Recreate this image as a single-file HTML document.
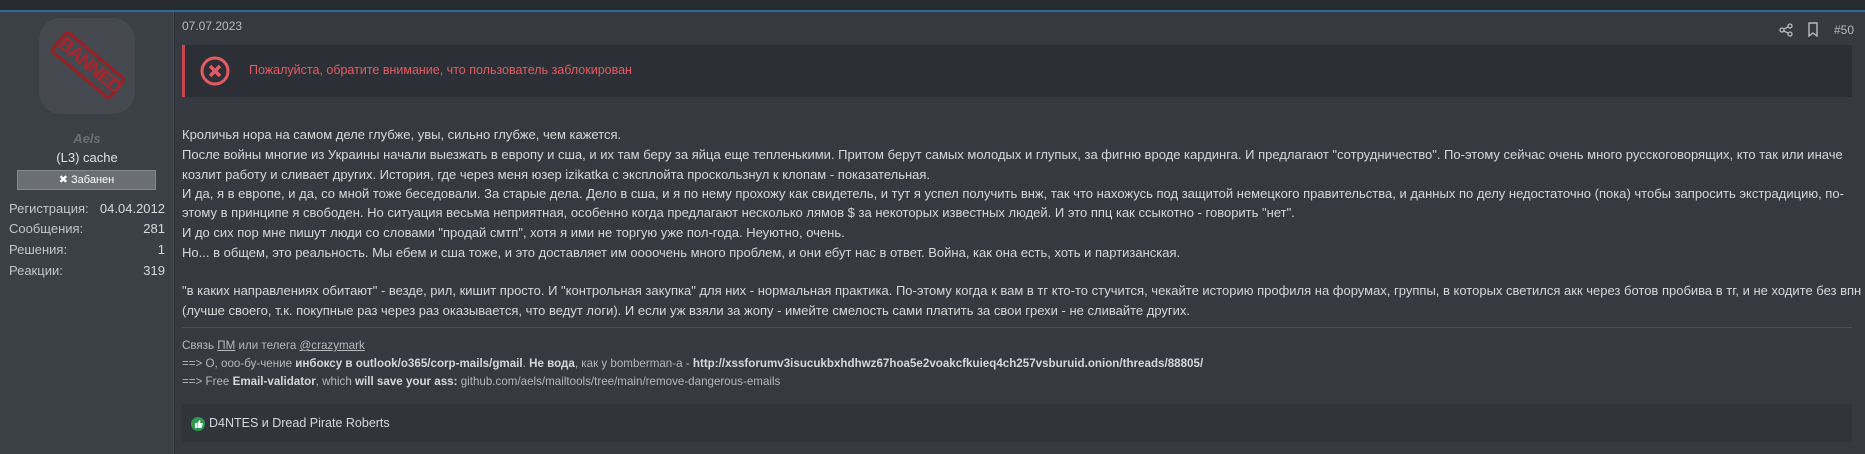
<!DOCTYPE html>
<html><head><meta charset="utf-8">
<style>
*{margin:0;padding:0;box-sizing:border-box}
body{width:1865px;height:454px;background:#2c3035;font-family:"Liberation Sans","DejaVu Sans",sans-serif;color:#d2d4d6;overflow:hidden;position:relative}
.top{position:absolute;left:0;top:0;width:1865px;height:10px;background:#272a2f}
.blue{position:absolute;left:0;top:10px;width:1865px;height:2px;background:#2f6a96}
.side{position:absolute;left:0;top:12px;width:174px;height:442px;background:#3b4047;border-right:1px solid #474c53}
.main{position:absolute;left:175px;top:12px;width:1690px;height:442px;background:#363a40}
.av{position:absolute;left:39px;top:18px;width:96px;height:96px;border-radius:22px;background:#45494f;overflow:hidden}
.stamp{position:absolute;left:10px;top:33px;width:78px;height:28px;border:3px solid #9a1f24;border-radius:5px;color:#a8242a;font-weight:bold;font-size:19px;text-align:center;line-height:22px;transform:rotate(40deg);letter-spacing:-1px}
.abs{position:absolute;white-space:nowrap}
.btn{position:absolute;left:17px;top:170px;width:139px;height:20px;background:#6b6e72;border:1px solid #85888c;color:#fff;font-size:11px;text-align:center;line-height:18px}
.st{position:absolute;left:9px;width:156px;font-size:13px;color:#c3c5c8}
.st span{float:right;color:#d7d8da}
.alert{position:absolute;left:182px;top:45px;width:1670px;height:52px;background:#2c2f35;border-left:3px solid #c9444c}
.txt{position:absolute;left:182px;font-size:13px;white-space:nowrap;color:#d6d7d9}
.sig{position:absolute;left:182px;font-size:11.6px;white-space:nowrap;color:#b5b8bb}
.sig b{color:#d6d7d9}
.react{position:absolute;left:182px;top:404px;width:1670px;height:38px;background:#31353b}
</style></head><body>
<div class="top"></div><div class="blue"></div>
<div class="side"></div>
<div class="main"></div>
<div class="av"><div class="stamp">BANNED</div></div>
<div class="abs" style="left:0;width:174px;text-align:center;top:131px;font-size:13px;font-style:italic;font-weight:bold;color:#6b6f75">Aels</div>
<div class="abs" style="left:0;width:174px;text-align:center;top:150px;font-size:13px;color:#e0e1e3">(L3) cache</div>
<div class="btn">✖ Забанен</div>
<div class="st" style="top:201px">Регистрация:<span>04.04.2012</span></div>
<div class="st" style="top:221px">Сообщения:<span>281</span></div>
<div class="st" style="top:242px">Решения:<span>1</span></div>
<div class="st" style="top:263px">Реакции:<span>319</span></div>

<div class="abs" style="left:182px;top:19px;font-size:12px;color:#b8bbbe">07.07.2023</div>
<svg class="abs" style="left:1779px;top:23px" width="14" height="14" viewBox="0 0 14 14" fill="none" stroke="#b8bbbe" stroke-width="1.3"><circle cx="11" cy="3" r="2"/><circle cx="3" cy="7" r="2"/><circle cx="11" cy="11" r="2"/><path d="M5 6l4-2M5 8l4 2"/></svg>
<svg class="abs" style="left:1807px;top:22px" width="12" height="15" viewBox="0 0 12 15" fill="none" stroke="#b8bbbe" stroke-width="1.4"><path d="M2 1h8v13l-4-3-4 3z"/></svg>
<div class="abs" style="left:1834px;top:23px;font-size:12px;color:#b8bbbe">#50</div>

<div class="alert"></div>
<svg class="abs" style="left:199px;top:55px" width="32" height="32" viewBox="0 0 32 32"><circle cx="16" cy="16" r="13" fill="none" stroke="#e35b62" stroke-width="3"/><path d="M11 11l10 10M21 11l-10 10" stroke="#e35b62" stroke-width="3.5"/></svg>
<div class="abs" style="left:249px;top:63px;font-size:12.5px;color:#e35b62">Пожалуйста, обратите внимание, что пользователь заблокирован</div>

<div class="txt" style="top:127px">Кроличья нора на самом деле глубже, увы, сильно глубже, чем кажется.</div>
<div class="txt" style="top:147px">После войны многие из Украины начали выезжать в европу и сша, и их там беру за яйца еще тепленькими. Притом берут самых молодых и глупых, за фигню вроде кардинга. И предлагают "сотрудничество". По-этому сейчас очень много русскоговорящих, кто так или иначе</div>
<div class="txt" style="top:167px">козлит работу и сливает других. История, где через меня юзер izikatka с эксплойта проскользнул к клопам - показательная.</div>
<div class="txt" style="top:186px">И да, я в европе, и да, со мной тоже беседовали. За старые дела. Дело в сша, и я по нему прохожу как свидетель, и тут я успел получить внж, так что нахожусь под защитой немецкого правительства, и данных по делу недостаточно (пока) чтобы запросить экстрадицию, по-</div>
<div class="txt" style="top:205px">этому в принципе я свободен. Но ситуация весьма неприятная, особенно когда предлагают несколько лямов $ за некоторых известных людей. И это ппц как ссыкотно - говорить "нет".</div>
<div class="txt" style="top:225px">И до сих пор мне пишут люди со словами "продай смтп", хотя я ими не торгую уже пол-года. Неуютно, очень.</div>
<div class="txt" style="top:245px">Но... в общем, это реальность. Мы ебем и сша тоже, и это доставляет им оооочень много проблем, и они ебут нас в ответ. Война, как она есть, хоть и партизанская.</div>
<div class="txt" style="top:283px">"в каких направлениях обитают" - везде, рил, кишит просто. И "контрольная закупка" для них - нормальная практика. По-этому когда к вам в тг кто-то стучится, чекайте историю профиля на форумах, группы, в которых светился акк через ботов пробива в тг, и не ходите без впн</div>
<div class="txt" style="top:303px">(лучше своего, т.к. покупные раз через раз оказывается, что ведут логи). И если уж взяли за жопу - имейте смелость сами платить за свои грехи - не сливайте других.</div>
<div class="abs" style="left:182px;top:327px;width:1670px;height:1px;background:#4a4e55"></div>
<div class="sig" style="top:339px">Связь <u>ПМ</u> или телега <u>@crazymark</u></div>
<div class="sig" style="top:357px">==&gt; О, ооо-бу-чение <b>инбоксу в outlook/o365/corp-mails/gmail</b>. <b>Не вода</b>, как у bomberman-а - <b>http://xssforumv3isucukbxhdhwz67hoa5e2voakcfkuieq4ch257vsburuid.onion/threads/88805/</b></div>
<div class="sig" style="top:375px">==&gt; Free <b>Email-validator</b>, which <b>will save your ass:</b> github.com/aels/mailtools/tree/main/remove-dangerous-emails</div>
<div class="react"></div>
<svg class="abs" style="left:191px;top:417px" width="14" height="14" viewBox="0 0 14 14"><circle cx="7" cy="7" r="7" fill="#2f9a52"/><path d="M4 6h2v5H4zM6.5 6l2-3c.8 0 1 .6.8 1.4L9 6h2c.6 0 .8.5.7 1l-.8 3c-.2.6-.5 1-1 1H6.5z" fill="#fff"/></svg>
<div class="abs" style="left:209px;top:416px;font-size:12.5px;color:#d6d7d9">D4NTES и Dread Pirate Roberts</div>
</body></html>
